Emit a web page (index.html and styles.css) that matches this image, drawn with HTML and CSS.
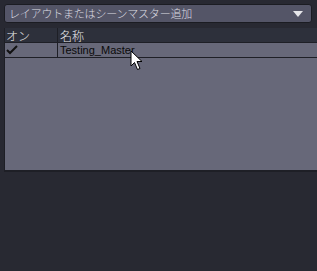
FILE: index.html
```html
<!DOCTYPE html>
<html lang="ja">
<head>
  <meta charset="UTF-8" />
  <title>シーンマスター</title>
  <link rel="stylesheet" href="styles.css">
</head>
<body>

  <!-- 追加メニュー -->
  <div class="addBar">
    <span class="addLabel">レイアウトまたはシーンマスター追加</span>
    <svg class="arrow" width="10" height="6" viewBox="0 0 10 6"><path d="M0 0H10L5 6Z" fill="#e6e6ea"/></svg>
  </div>

  <!-- 一覧 -->
  <div class="list">
    <div class="row head">
      <div class="colOn">オン</div>
      <div class="colName">名称</div>
    </div>
    <div class="row item">
      <div class="colOn">
        <svg width="12" height="10" viewBox="0 0 12 10"><path d="M1 5L4 8L11 1" stroke="#111" stroke-width="2" fill="none"/></svg>
      </div>
      <div class="colName">Testing_Master</div>
    </div>
  </div>

  <!-- マウスカーソル -->
  <svg class="cursor" width="14" height="21" viewBox="0 0 14 21">
    <path d="M1 1V16L4.5 12.5L7.5 19.5L10 18.5L7 11.5H12Z" fill="#fff" stroke="#000" stroke-width="1"/>
  </svg>

</body>
</html>
```

FILE: styles.css
```css
body {
  margin: 0;
  width: 317px;
  height: 271px;
  background: #282932;
  font-family: "Noto Sans CJK JP", sans-serif;
  position: relative;
  overflow: hidden;
}
.addBar {
  margin: 4px 5px 0 4px;
  height: 17px;
  border: 1px solid #1b1c22;
  border-radius: 3px;
  background: #545567;
  display: flex;
  align-items: center;
  padding: 0 4px;
  color: #dcdce2;
  font-size: 11px;
  font-weight: 300;
  letter-spacing: -0.2px;
}
.addLabel {
  flex: 1;
  line-height: 17px;
}
.arrow {
  margin-right: 4px;
}
.list {
  margin: 5px 0 0 4px;
  height: 142px;
  background: #676879;
  border-left: 1px solid #1e1f26;
  border-bottom: 2px solid #1e1f26;
}
.row {
  display: flex;
  height: 14px;
  border-bottom: 1px solid #1e1f26;
}
.head {
  background: #2d303b;
  color: #e6e6ea;
  font-size: 12px;
  font-weight: 300;
  line-height: 15px;
}
.item {
  color: #0a0a0a;
  font-family: "Liberation Sans", sans-serif;
  font-size: 11px;
  line-height: 15px;
}
.colOn {
  width: 51px;
  border-right: 1px solid #1e1f26;
  display: flex;
  align-items: center;
  padding-left: 1px;
}
.colName {
  flex: 1;
  padding-left: 2px;
}
.cursor {
  position: absolute;
  left: 130px;
  top: 50px;
}
```
